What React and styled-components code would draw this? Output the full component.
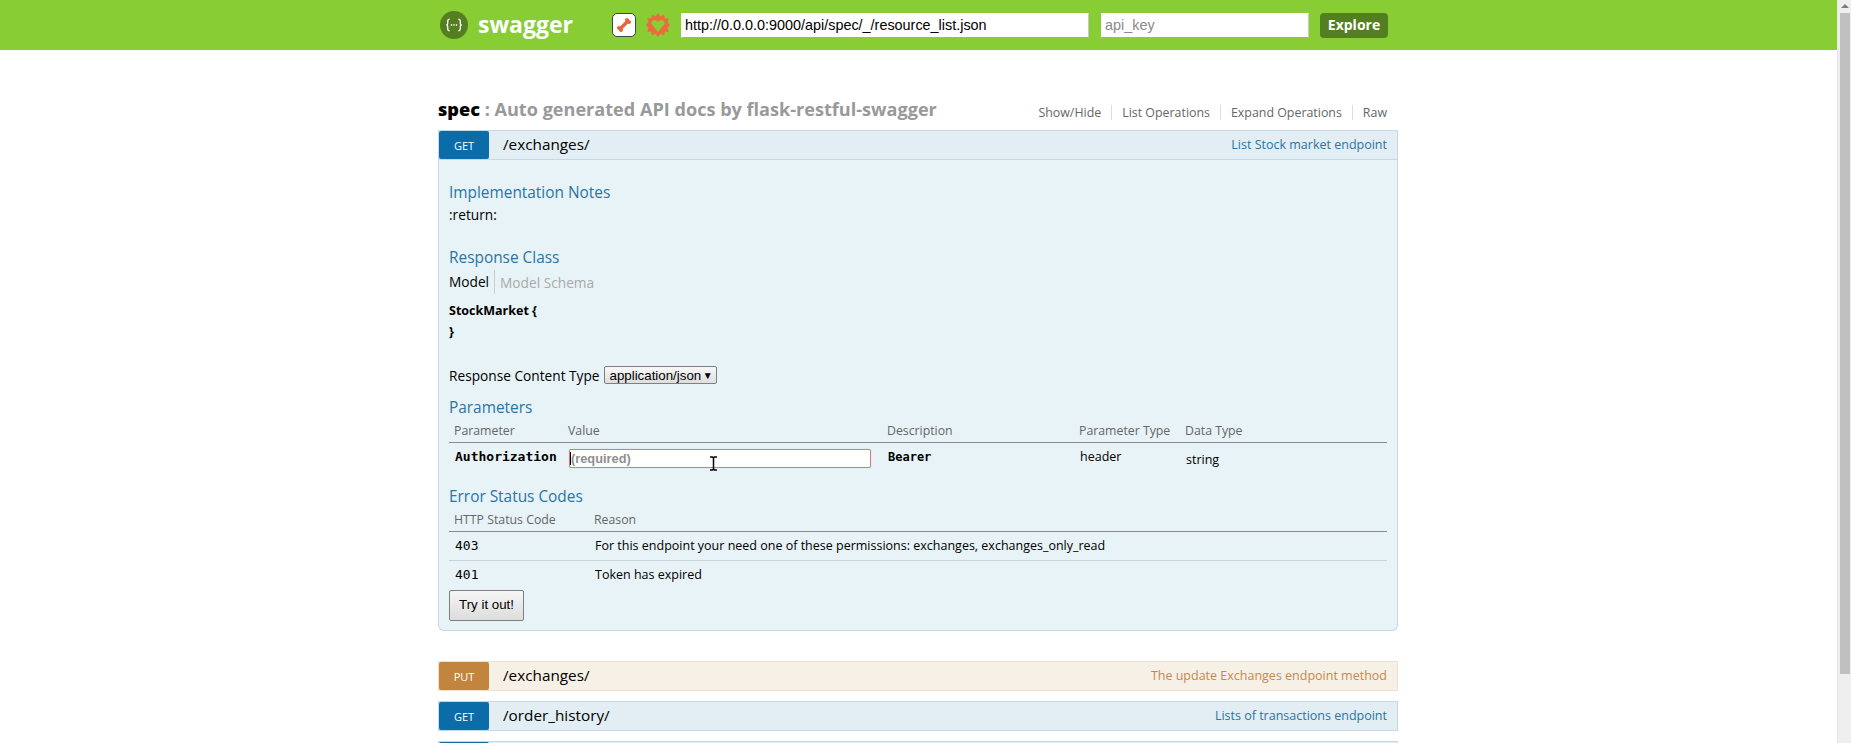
import React from 'react'
import styled, { createGlobalStyle } from 'styled-components'

const GlobalStyle = createGlobalStyle`
  html, body {
    height: 100%;
    overflow: hidden;
  }
  body {
    margin: 0;
    background: #fff;
    font-family: "Open Sans", "Noto Sans", sans-serif;
    font-size: 13.7px;
    color: #000;
  }
`

const Frame = styled.div`
  display: flex;
  height: 743px;
  overflow: hidden;
`
const Page = styled.div`
  flex: 1;
  min-width: 0;
`
const ScrollRail = styled.div`
  width: 14px;
  flex: none;
  box-sizing: border-box;
  padding: 4px 1px 0 2px;
  background: #efefef;
  border-left: 1px solid #e6e6e6;
  display: flex;
  flex-direction: column;
  align-items: center;
`
const ScrollArrow = styled.div`
  width: 0;
  height: 0;
  border-left: 4px solid transparent;
  border-right: 4px solid transparent;
  border-bottom: 4px solid #7d7d7d;
  margin-bottom: 5px;
`
const ScrollThumb = styled.div`
  width: 100%;
  height: 661px;
  background: #c0c0c0;
`

const Header = styled.div`
  height: 50px;
  background: #88cd33;
`
const Inner = styled.div`
  width: 961px;
  box-sizing: border-box;
  padding-right: 1px;
  margin: 0 auto;
`
const HeaderBar = styled(Inner)`
  height: 50px;
  display: flex;
  align-items: center;
`
const Logo = styled.div`
  display: flex;
  align-items: center;
  width: 174px;
  box-sizing: border-box;
  padding-left: 2px;
  color: #fff;
  font-size: 23px;
  font-weight: 700;
  svg { margin-right: 10px; }
  span { margin-bottom: 3px; }
`
const BoneButton = styled.div`
  width: 24px;
  height: 24px;
  box-sizing: border-box;
  background: #fff;
  border: 1.5px solid #444;
  border-radius: 5px;
  display: flex;
  align-items: center;
  justify-content: center;
`
const Gear = styled.svg`
  margin: 0 11px 0 10px;
`
const HeadInput = styled.input`
  box-sizing: border-box;
  width: ${p => p.$width}px;
  height: 25px;
  margin-right: ${p => p.$gap}px;
  padding: 3px;
  border: 1px solid #fff;
  border-bottom: 1px solid #a8a8a8;
  border-right: 1px solid #c8c8c8;
  background: #fff;
  font-family: "Liberation Sans", Arial, sans-serif;
  font-size: 14.4px;
  color: #000;
  outline: none;
  &::placeholder { color: #8a8a8a; }
`
const ExploreButton = styled.div`
  width: 68px;
  height: 25px;
  box-sizing: border-box;
  padding-bottom: 2px;
  background: #547f20;
  border-radius: 4px;
  color: #fff;
  font-weight: 700;
  font-size: 14px;
  display: flex;
  align-items: center;
  justify-content: center;
`

const ApiHeading = styled.div`
  height: 80px;
  display: flex;
  align-items: flex-end;
  justify-content: space-between;
  padding-bottom: 8px;
  box-sizing: border-box;
`
const ApiTitle = styled.h2`
  margin: 0;
  font-size: 18.1px;
  font-weight: 700;
  line-height: 26px;
  color: #999;
  b { color: #000; }
`
const NavList = styled.div`
  display: flex;
  align-items: center;
  padding-right: 11px;
  margin-bottom: 2px;
`
const NavLink = styled.span`
  font-size: 12.4px;
  line-height: 15px;
  color: #666;
  padding: 0 10px;
  border-right: 1px solid #ddd;
  &:last-child { border-right: 0; padding-right: 0; }
`

const OpHeading = styled.div`
  height: 30px;
  box-sizing: border-box;
  display: flex;
  align-items: center;
  background: ${p => p.$kind === 'put' ? '#f7f0e6' : '#e2eef3'};
  border: 1px solid ${p => p.$kind === 'put' ? '#f0e0ca' : '#c3d9e6'};
`
const Method = styled.span`
  width: 50px;
  height: 28px;
  flex: none;
  display: flex;
  align-items: center;
  justify-content: center;
  box-sizing: border-box;
  padding-top: 1px;
  border-radius: 2px;
  color: #fff;
  font-size: 11px;
  background: ${p => p.$kind === 'put' ? '#c1853d' : '#0a6ca8'};
`
const Path = styled.span`
  margin: 0 0 2px 14px;
  font-size: 15.3px;
  color: #000;
`
const Summary = styled.span`
  margin: 0 0 2px auto;
  padding-right: 10px;
  font-size: 12.5px;
  color: ${p => p.$kind === 'put' ? '#c5894a' : '#2a75a5'};
`
const Operation = styled.div`
  margin-bottom: 10px;
`
const OpContent = styled.div`
  height: 471px;
  box-sizing: border-box;
  margin-bottom: 30px;
  padding: 22px 10px 0;
  background: #e7f3f6;
  border: 1px solid #c3d9e6;
  border-top: 0;
  border-radius: 0 0 6px 6px;
`
const SectionTitle = styled.h4`
  margin: 0;
  font-size: 15.4px;
  font-weight: 400;
  line-height: 22px;
  color: #2a75a5;
`
const Note = styled.div`
  line-height: 21px;
  margin-bottom: 22px;
`
const Tabs = styled.div`
  display: flex;
  align-items: center;
  height: 24px;
  margin-top: 1px;
`
const Tab = styled.span`
  color: ${p => p.$active ? '#000' : '#aaa'};
  padding-right: 5px;
  &:first-child { border-right: 1px solid #ccc; margin-right: 5px; line-height: 24px; }
`
const ModelBlock = styled.div`
  margin: 6px 0 23px;
`
const ModelLine = styled.div`
  font-size: 12.5px;
  font-weight: 700;
  line-height: 21px;
`
const ContentType = styled.div`
  display: flex;
  align-items: center;
  height: 20px;
  margin-bottom: 12px;
`
const FakeSelect = styled.div`
  display: flex;
  align-items: center;
  justify-content: space-between;
  width: 113px;
  height: 18px;
  box-sizing: border-box;
  margin-left: 4px;
  padding: 0 3px 0 5px;
  background: linear-gradient(#f8f8f8, #dedede);
  border: 1px solid #808080;
  border-radius: 2px;
  font-family: "Liberation Sans", Arial, sans-serif;
  font-size: 13.3px;
  i { font-style: normal; font-size: 10px; }
`
const Row = styled.div`
  display: grid;
  grid-template-columns: ${p => p.$columns};
  align-items: center;
  border-bottom: 1px solid ${p => p.$head ? '#8c8c8c' : p.$last ? 'transparent' : '#c9d2d6'};
  height: ${p => p.$height}px;
  box-sizing: border-box;
`
const Cell = styled.span`
  padding-left: ${p => p.$head ? '5px' : '6px'};
  font-size: ${p => p.$head ? '12.3px' : '12.5px'};
  color: ${p => p.$head ? '#666' : '#000'};
  margin-bottom: ${p => p.$raised ? p.$raised : 0}px;
  margin-top: ${p => p.$dropped ? '2px' : '0'};
`
const CodeCell = styled.span`
  padding-left: 6px;
  font-family: "DejaVu Sans Mono", "Liberation Mono", monospace;
  font-size: ${p => p.$small ? '12px' : '13px'};
  font-weight: ${p => p.$bold ? 700 : 400};
  margin-bottom: ${p => p.$raised}px;
`
const ValueCell = styled.div`
  position: relative;
  padding-left: 6px;
`
const RequiredInput = styled.input`
  box-sizing: border-box;
  display: block;
  width: 302px;
  height: 19px;
  padding: 0 1px;
  background: #fff;
  border: 1px solid #c98277;
  border-radius: 2px;
  box-shadow: 0 0 1px #e0a9a0;
  font-family: "Liberation Sans", Arial, sans-serif;
  font-size: 12.8px;
  font-weight: 700;
  outline: none;
  &::placeholder { color: #8f8f8f; }
`
const Caret = styled.i`
  position: absolute;
  left: 7px;
  top: 3px;
  width: 1px;
  height: 13px;
  background: #000;
`
const BeamCursor = styled.svg`
  position: absolute;
  left: 146px;
  top: 7px;
`
const ParamBlock = styled.div`
  margin-bottom: 12px;
`
const TryButton = styled.div`
  width: 75px;
  height: 31px;
  box-sizing: border-box;
  padding-bottom: 2px;
  display: flex;
  align-items: center;
  justify-content: center;
  background: linear-gradient(#f6f6f6, #dcdcdc);
  border: 1px solid #808080;
  border-radius: 2px;
  font-family: "Liberation Sans", Arial, sans-serif;
  font-size: 13.3px;
`

const paramColumns = '114px 319px 192px 106px 1fr'
const errorColumns = '140px 1fr'

const errors = [
  { code: '403', reason: 'For this endpoint your need one of these permissions: exchanges, exchanges_only_read' },
  { code: '401', reason: 'Token has expired' },
]

const moreOperations = [
  { kind: 'put', method: 'PUT', path: '/exchanges/', summary: 'The update Exchanges endpoint method' },
  { kind: 'get', method: 'GET', path: '/order_history/', summary: 'Lists of transactions endpoint' },
  { kind: 'get' },
]

const OpRow = ({ kind, method, path, summary }) => (
  <OpHeading $kind={kind}>
    <Method $kind={kind}>{method}</Method>
    <Path>{path}</Path>
    <Summary $kind={kind}>{summary}</Summary>
  </OpHeading>
)

export default function App() {
  return (
    <Frame>
      <GlobalStyle />
      <Page>
        <Header>
          <HeaderBar>
            <Logo>
              <svg width="28" height="28" viewBox="0 0 29 29">
                <circle cx="14.5" cy="14.5" r="14.5" fill="#547f20" />
                <path d="M10 8.500c-2 0-2 1-2 2.500v2c0 1-.6 1.500-1.500 1.500.9 0 1.500.5 1.500 1.500v2c0 1.500 0 2.500 2 2.500M19 8.500c2 0 2 1 2 2.500v2c0 1 .6 1.500 1.500 1.500-.9 0-1.500.5-1.500 1.500v2c0 1.500 0 2.500-2 2.500" fill="none" stroke="#fff" strokeWidth="1.300" />
                <path d="M11.200 14.500h1.400M13.800 14.500h1.400M16.400 14.500h1.400" stroke="#fff" strokeWidth="1.400" />
              </svg>
              <span>swagger</span>
            </Logo>
            <BoneButton>
              <svg width="16" height="16" viewBox="0 0 16 16">
                <path d="M4 12L12 4" stroke="#e8633a" strokeWidth="3.400" />
                <circle cx="11" cy="3" r="2" fill="#e8633a" />
                <circle cx="13" cy="5" r="2" fill="#e8633a" />
                <circle cx="3" cy="11" r="2" fill="#e8633a" />
                <circle cx="5" cy="13" r="2" fill="#e8633a" />
              </svg>
            </BoneButton>
            <Gear width="24" height="24" viewBox="0 0 24 24">
              <path fillRule="evenodd" fill="#ec6a3c" d="M12 0l2.500 3.500 3.500-2 .8 4 4-.3-1.300 3.900 2.500 2.900-2.500 2.900 1.300 3.900-4-.3-.8 4-3.500-2-2.500 3.500-2.500-3.500-3.500 2-.8-4-4 .3 1.300-3.900-2.500-2.900 2.500-2.900-1.300-3.900 4 .3.8-4 3.500 2z M12 19l6.500-8c1-3-3-5-6.500-2.500C8.500 6 4.500 8 5.500 11z" />
            </Gear>
            <HeadInput $width={408} $gap={12} defaultValue="http://0.0.0.0:9000/api/spec/_/resource_list.json" />
            <HeadInput $width={208} $gap={11} placeholder="api_key" />
            <ExploreButton>Explore</ExploreButton>
          </HeaderBar>
        </Header>
        <Inner>
          <ApiHeading>
            <ApiTitle><b>spec</b> : Auto generated API docs by flask-restful-swagger</ApiTitle>
            <NavList>
              <NavLink>Show/Hide</NavLink>
              <NavLink>List Operations</NavLink>
              <NavLink>Expand Operations</NavLink>
              <NavLink>Raw</NavLink>
            </NavList>
          </ApiHeading>
          <OpRow kind="get" method="GET" path="/exchanges/" summary="List Stock market endpoint" />
          <OpContent>
            <SectionTitle>Implementation Notes</SectionTitle>
            <Note>:return:</Note>
            <SectionTitle>Response Class</SectionTitle>
            <Tabs>
              <Tab $active>Model</Tab>
              <Tab>Model Schema</Tab>
            </Tabs>
            <ModelBlock>
              <ModelLine>StockMarket {'{'}</ModelLine>
              <ModelLine>{'}'}</ModelLine>
            </ModelBlock>
            <ContentType>
              Response Content Type
              <FakeSelect>application/json <i>▼</i></FakeSelect>
            </ContentType>
            <SectionTitle>Parameters</SectionTitle>
            <ParamBlock>
              <Row $head $columns={paramColumns} $height={24}>
                <Cell $head>Parameter</Cell>
                <Cell $head>Value</Cell>
                <Cell $head>Description</Cell>
                <Cell $head>Parameter Type</Cell>
                <Cell $head>Data Type</Cell>
              </Row>
              <Row $last $columns={paramColumns} $height={31}>
                <CodeCell $bold $raised={3}>Authorization</CodeCell>
                <ValueCell>
                  <RequiredInput placeholder="(required)" />
                  <Caret />
                  <BeamCursor width="9" height="15" viewBox="0 0 9 15">
                    <path d="M1 1h2.500l1 1 1-1H8M4.500 2v11M1 14h2.500l1-1 1 1H8" fill="none" stroke="#000" strokeWidth="1.500" />
                  </BeamCursor>
                </ValueCell>
                <CodeCell $bold $small $raised={3}>Bearer</CodeCell>
                <Cell $raised={3}>header</Cell>
                <Cell $dropped>string</Cell>
              </Row>
            </ParamBlock>
            <SectionTitle>Error Status Codes</SectionTitle>
            <Row $head $columns={errorColumns} $height={24}>
              <Cell $head>HTTP Status Code</Cell>
              <Cell $head>Reason</Cell>
            </Row>
            {errors.map((e, i) => (
              <Row key={e.code} $last={i === errors.length - 1} $columns={errorColumns} $height={29}>
                <CodeCell $raised={2}>{e.code}</CodeCell>
                <Cell $raised={2}>{e.reason}</Cell>
              </Row>
            ))}
            <TryButton>Try it out!</TryButton>
          </OpContent>
          {moreOperations.map((op, i) => (
            <Operation key={i}>
              <OpRow {...op} />
            </Operation>
          ))}
        </Inner>
      </Page>
      <ScrollRail>
        <ScrollArrow />
        <ScrollThumb />
      </ScrollRail>
    </Frame>
  )
}
